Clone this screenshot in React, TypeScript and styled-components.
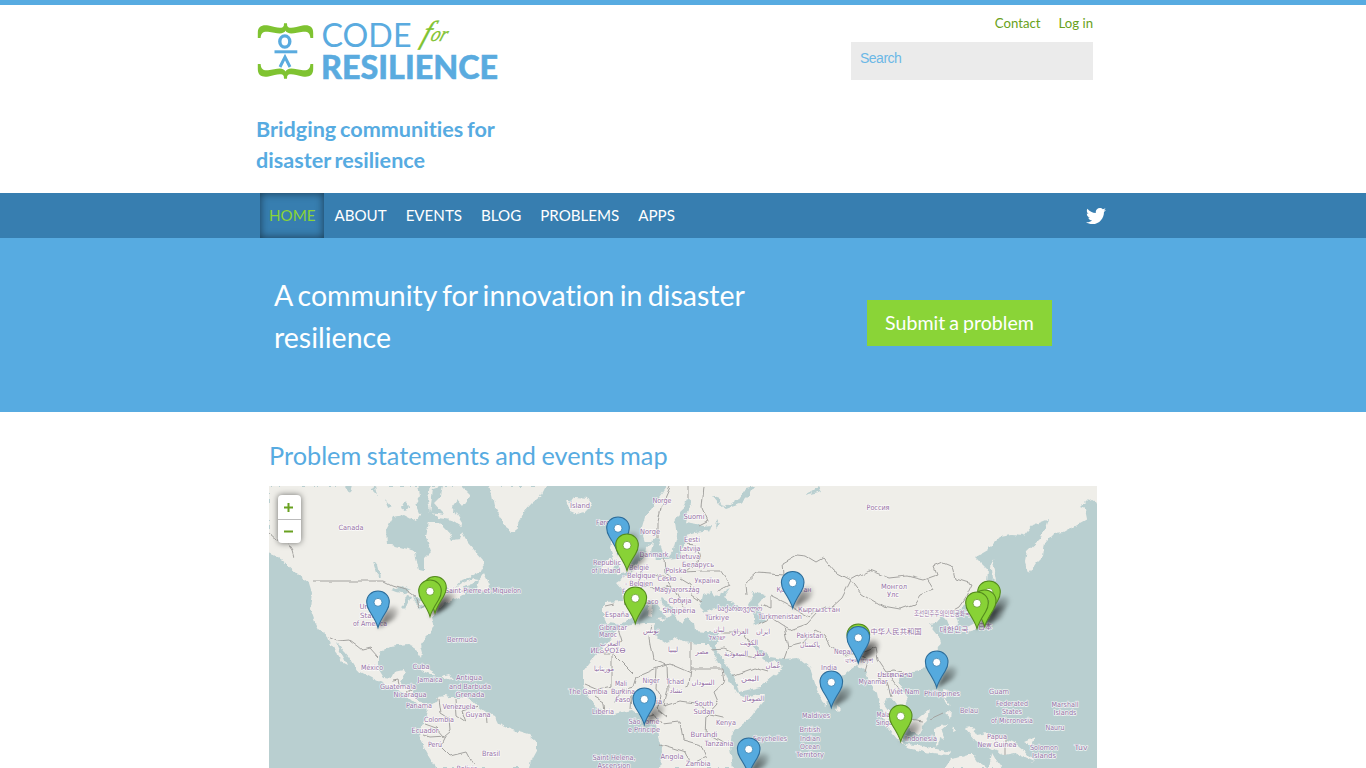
import React from 'react';
import styled, { createGlobalStyle } from 'styled-components';
import { FaTwitter } from 'react-icons/fa';

const BLUE = '#57abe1';
const GREEN = '#8ad437';

const GlobalStyle = createGlobalStyle`
  * { box-sizing: border-box; }
  html, body { margin: 0; height: 768px; overflow: hidden; }
  body { background: #fff; font-family: Lato, sans-serif; font-variant-ligatures: none; }
  a { text-decoration: none; color: inherit; }
`;

const Page = styled.div`
  height: 768px;
  overflow: hidden;
  border-top: 5px solid ${BLUE};
`;

const Container = styled.div`
  width: 854px;
  margin: 0 auto;
`;

const Header = styled(Container)`
  display: flex;
  justify-content: space-between;
  height: 188px;
`;

const Brand = styled.div`
  width: 260px;
`;

const Logo = styled.svg`
  display: block;
  width: 250px;
  height: 76px;
  margin-top: 7px;
  overflow: visible;
`;

const Slogan = styled.h2`
  margin: 26px 0 0;
  font-size: 21.6px;
  line-height: 31px;
  font-weight: 700;
  word-spacing: -1.5px;
  color: ${BLUE};
`;

const Tools = styled.div`
  width: 242px;
  margin-right: 17px;
`;

const UserLinks = styled.div`
  display: flex;
  justify-content: flex-end;
  gap: 18px;
  padding-top: 10px;
  height: 37px;
  font-size: 13.2px;
  line-height: 17px;
  color: #69a120;
`;

const Search = styled.div`
  height: 38px;
  padding: 7px 9px;
  background: #ebebeb;
  color: #6cb8e6;
  font: 14px/18px "Liberation Sans", sans-serif;
  letter-spacing: -0.5px;
`;

const NavBar = styled.nav`
  height: 45px;
  background: #377eb0;
`;

const NavInner = styled(Container)`
  display: flex;
  padding-left: 4px;
  padding-right: 4px;
`;

const NavItem = styled.a<{ $active?: boolean }>`
  height: 45px;
  padding: 0 9px;
  margin-right: 1px;
  font-size: 15.13px;
  line-height: 45px;
  color: ${p => (p.$active ? GREEN : '#fff')};
  box-shadow: ${p => (p.$active ? 'inset 0 0 8px rgba(0,0,0,.55)' : 'none')};
`;

const TwitterLink = styled.a`
  display: flex;
  align-items: center;
  margin-left: auto;
  color: #fff;
`;

const Hero = styled.section`
  height: 174px;
  background: ${BLUE};
`;

const HeroInner = styled(Container)`
  display: flex;
  justify-content: space-between;
  align-items: flex-start;
  padding: 36px 58px 0 18px;
`;

const HeroText = styled.p`
  width: 510px;
  margin: 0;
  color: #fff;
  font-size: 28.5px;
  line-height: 42px;
  word-spacing: -2.1px;
`;

const SubmitButton = styled.a`
  width: 185px;
  height: 46px;
  margin-top: 26px;
  background: ${GREEN};
  color: #fff;
  font-size: 19.6px;
  line-height: 46px;
  text-align: center;
  word-spacing: -1px;
`;

const MapSection = styled.section`
  width: 828px;
  margin: 0 auto;
  padding-top: 25px;
`;

const MapTitle = styled.h2`
  margin: 0;
  height: 49px;
  font-size: 25.3px;
  line-height: 36px;
  font-weight: 400;
  word-spacing: -1px;
  color: ${BLUE};
`;

const MapFrame = styled.div`
  position: relative;
  height: 282px;
  overflow: hidden;
  background: #b9cfd0;
`;

const MapDrawing = styled.svg`
  display: block;
  width: 828px;
  height: 282px;
`;

const ZoomControl = styled.div`
  position: absolute;
  top: 9px;
  left: 9px;
  width: 23px;
  border-radius: 4px;
  background: #fff;
  box-shadow: 0 0 6px rgba(0, 0, 0, 0.55);
`;

const ZoomButton = styled.div`
  display: flex;
  align-items: center;
  justify-content: center;
  height: 24px;
  padding-right: 2px;
  & + & { border-top: 1px solid #bbb; }
`;

const land = [
  // North, Central and western South America
  'M269,486 L461,486 470,495 462,506 457,500 452,507 462,523 461,530 468,543 483,560 484,569 470,577 462,580 455,588 464,582 473,578 479,579 471,584 463,586 466,592 459,597 451,601 446,603 440,607 436,613 432,617 434,625 431,632 425,638 420,645 422,653 421,659 417,653 414,646 408,644 399,645 390,646 382,651 378,658 378,667 384,677 391,678 394,672 403,670 405,673 400,681 402,685 413,687 414,696 418,701 424,703 429,706 435,703 440,696 445,695 450,698 469,698 478,706 486,712 495,716 499,724 508,728 519,732 529,735 537,742 537,749 531,760 529,768 436,768 429,757 421,742 420,731 425,719 428,709 419,707 411,700 402,692 386,685 372,678 357,670 349,657 340,646 336,642 339,649 344,658 347,665 343,663 337,653 331,645 328,637 319,630 315,622 310,608 312,593 309,583 299,575 287,564 278,557 269,553Z',
  'M489,486 L492,495 494,505 500,516 505,527 512,532 516,532 518,523 523,513 532,503 541,496 546,486Z',
  'M484,573 L487,579 490,586 487,591 477,590 479,580Z',
  'M566,500 L571,502 575,497 588,498 592,505 585,512 577,514 570,511Z',
  'M612,540 L618,543 622,555 632,565 630,572 617,575 620,566 614,560 610,548Z',
  'M603,562 L612,558 615,565 611,572 600,574Z',
  // Eurasia
  'M667,486 L657,500 645,517 641,530 645,542 652,542 658,537 662,550 667,558 673,550 677,536 675,522 682,509 687,499 692,503 687,513 685,522 697,524 708,526 703,531 695,532 685,535 684,543 681,551 682,558 668,560 655,560 651,553 653,543 646,547 644,558 637,563 631,572 625,577 616,583 622,590 623,601 604,602 604,617 607,623 618,624 626,622 633,617 640,608 652,601 657,605 667,618 671,615 662,604 661,596 671,606 678,620 682,625 687,617 694,623 695,631 707,632 718,632 718,640 715,648 723,660 735,680 739,692 760,687 777,673 783,666 775,660 768,663 760,655 752,645 757,647 770,657 783,659 798,658 810,668 813,677 817,690 825,706 831,700 834,684 847,672 857,665 865,670 870,683 877,693 880,708 887,716 893,722 892,715 884,704 887,698 893,700 898,707 904,705 908,698 902,688 898,679 904,674 920,671 934,657 941,643 938,634 930,624 938,622 943,616 947,620 950,628 955,629 958,621 954,614 965,605 977,594 987,582 988,570 980,562 975,557 987,550 1000,537 1012,535 1024,536 1033,525 1048,519 1044,531 1039,540 1027,551 1025,562 1029,574 1036,563 1043,556 1045,542 1054,533 1064,532 1087,519 1085,509 1080,507 1089,498 1097,503 1110,510 1110,470 667,470Z',
  // Africa
  'M618,628 L626,626 642,623 655,623 653,632 659,638 667,643 675,637 684,642 698,644 710,644 718,663 727,677 737,692 743,698 765,694 763,701 750,718 732,733 730,747 733,768 660,768 662,750 658,737 656,724 642,717 632,710 618,713 607,716 597,708 587,696 584,684 584,670 590,662 599,652 610,640Z',
  // Islands
  'M418,669 L427,668 437,674 430,674Z M442,676 L449,674 453,678 444,679Z',
  'M837,705 L841,709 838,712 835,709Z',
  'M992,558 L995,570 997,581 992,579 991,568Z M985,593 L994,590 994,600 987,601Z M985,604 L990,612 984,624 974,630 963,633 962,630 973,624 981,618Z',
  'M879,712 L887,717 898,731 904,744 898,740 888,728Z M904,744 L917,745 932,748 950,752 948,755 925,752 907,748Z',
  'M909,718 L916,720 922,715 930,708 929,716 925,722 918,735 910,732Z',
  'M935,728 L948,724 941,730 945,740 939,737 938,747 935,740Z M943,689 L948,690 946,699 951,706 945,702Z M945,715 L951,710 950,719Z M953,726 L956,731 952,732Z M940,676 L943,671 942,680Z',
  'M965,728 L972,727 977,735 987,733 1000,737 1014,742 1024,750 1034,762 1014,753 1004,755 990,748 976,741Z M1024,742 L1036,737 1031,746Z',
  'M945,768 L951,759 957,758 967,755 974,755 979,763 987,768Z M989,768 L992,753 996,760 1002,768Z',
  'M649,605 L652,605 651,617 648,616Z M667,618 L663,622 656,619Z',
];

const water = [
  // Hudson Bay, Hudson Strait and the Arctic channels
  'M386,530 L393,517 405,515 416,521 421,513 428,510 438,518 452,520 463,527 460,539 452,540 448,532 438,522 429,522 426,537 431,551 424,558 424,571 419,570 416,558 415,551 400,547 387,544Z',
  'M418,484 L430,484 428,500 430,511 419,514 415,504 420,496Z M433,489 L443,486 441,496 434,503 440,510 445,515 430,513Z',
  'M405,500 L409,505 405,511 401,508Z M345,486 L352,486 350,493Z M371,488 L376,486 378,495Z M385,499 L392,507 388,509Z',
  'M373,562 L378,565 381,577 377,575Z',
  'M392,590 L402,586 411,590 406,594 397,592Z M407,595 L411,596 405,609 402,606Z M413,595 L422,598 419,607 415,603Z M417,608 L427,604 425,609Z',
  'M700,607 L703,595 712,592 717,597 730,588 723,597 737,605 740,611 720,608 705,612Z',
  'M752,597 L753,592 765,595 759,603 761,613 765,621 755,625 753,613 748,605Z',
  'M711,495 L720,498 723,507 738,500 746,488 754,486 750,494 740,504 726,509 719,504Z M805,495 L814,490 819,486 822,491Z M703,526 L712,525 709,533Z M717,519 L720,524 716,528Z',
];

const borders = [
  'M269,533 L277,540 286,541 292,550 294,557',
  'M313,581 L384,581 392,585 405,589 415,596 419,608 428,601 438,600',
  'M329,637 L338,641 349,640 357,646 362,650 370,648 378,657',
  'M393,680 L398,679 400,688 M411,689 L405,694',
  'M439,699 L441,713 449,718 450,730 443,736 436,728 425,724 M455,700 L456,715 466,722 462,711 478,706 M486,712 L487,722 M423,735 L430,737 446,736 441,746 450,755 466,751 473,764',
  'M670,487 L661,507 658,522 658,538 M688,486 L688,499 M704,486 L702,507 708,521 700,525',
  'M685,543 L696,544 700,559 685,572 M664,558 L665,573 675,579 M685,572 L703,571 720,571 730,585 716,592 M680,579 L690,585 692,595 702,602',
  'M640,571 L639,584 649,585 655,590 670,586 677,592 684,607 M604,606 L613,604 M623,603 L641,607 M655,574 L665,578 672,587',
  'M747,595 L746,583 757,573 784,575 783,563 797,555 806,556 816,562 823,558 834,571 851,580 842,598 832,607 817,610 809,617 798,611 785,603 771,596 771,608 761,604',
  'M851,580 L869,570 889,578 907,576 923,580 937,575 934,567 943,563 953,567 956,579 972,584 966,597 959,607 950,612',
  'M851,580 L861,593 883,606 900,609 914,604 920,595 934,589 927,578',
  'M757,624 L770,618 782,626 790,630 807,624 817,613 M784,627 L788,647 784,658 M788,647 L804,643 815,630 825,635 832,648 847,656 858,654 867,651 876,647',
  'M691,643 L691,669 722,669 M691,669 L689,684 684,687 M598,653 L612,653 636,677 657,668 670,664 691,673 M652,624 L649,638 653,660 667,665 M612,653 L612,686 598,689 584,683',
  'M618,628 L622,641 611,646 M636,677 L633,687 619,691 615,703 M657,668 L656,689 661,697 657,709 667,717 M667,665 L668,690 664,706 680,701 696,703 710,714 723,717 M642,717 L654,714 661,724 M630,709 L631,696 M604,713 L603,702 595,697',
  'M722,669 L724,682 713,692 718,704 707,716 706,734 715,737 729,745 M732,676 L754,668 768,672 M712,650 L724,649 738,655 757,658 M722,632 L743,632 752,645 M662,724 L680,722 683,740 701,745 706,757 691,764 686,752 660,744',
  'M858,654 L868,660 865,671 M876,647 L878,660 886,672 894,671 902,673 M878,678 L887,682 891,696 M887,672 L900,690 M943,714 L930,720 M909,719 L923,721 M1005,738 L1005,755',
];

// text, centre x, baseline y, drawn width
const labels: [string, number, number, number][] = [
  ['Canada', 351, 530, 25], ['United', 371, 609, 23], ['States', 371, 618, 22], ['of America', 370, 626, 34],
  ['Saint-Pierre-et-Miquelon', 483, 593, 76], ['Bermuda', 462, 642, 30], ['México', 372, 670, 22],
  ['Cuba', 421, 669, 17], ['Jamaica', 430, 682, 25], ['Guatemala', 398, 689, 36], ['Nicaragua', 410, 697, 33],
  ['Antigua', 469, 680, 26], ['and Barbuda', 470, 689, 42], ['Grenada', 470, 697, 29], ['Panama', 419, 708, 26],
  ['Venezuela', 459, 709, 33], ['Guyana', 478, 717, 25], ['Colombia', 439, 722, 30], ['Ecuador', 425, 733, 27],
  ['Perú', 435, 747, 14], ['Brasil', 491, 756, 18], ['Bolivia', 467, 771, 21],
  ['Ísland', 580, 508, 20], ['Norge', 662, 503, 19], ['Norge', 650, 534, 20], ['Føroyar', 608, 525, 24],
  ['Suomi', 694, 519, 21], ['Danmark', 654, 557, 29], ['Eesti', 692, 542, 16], ['Latvija', 690, 551, 21],
  ['Lietuva', 688, 558.5, 24], ['Беларусь', 698, 567, 32], ['Republic', 607, 565, 28], ['of Ireland', 606, 573, 29],
  ['België', 639, 570, 20], ['- Belgique', 639, 578, 33], ['- Belgien', 639, 586, 28], ['Polska', 676, 573, 21],
  ['Česko', 667, 581, 19], ['Україна', 707, 583, 25], ['Magyarország', 677, 592, 45], ['France', 633, 594, 22],
  ['Monaco', 646, 604, 25], ['Србија', 680, 603, 23], ['Shqipëria', 679, 613, 33], ['España', 617, 617, 24],
  ['Gibraltar', 613, 630, 28], ['Maroc', 608, 637, 18], ['المغرب', 610, 646, 20], ['ⵍⵎⴰⵖⵔⵉⴱ', 608, 653, 35],
  ['تونس', 651, 633, 16], ['ليبيا', 673, 652, 10], ['موريتانيا', 604, 671, 20], ['مصر', 702, 654, 13],
  ['Mali', 621, 686, 12], ['Niger', 651, 683, 17], ['Tchad', 675, 684, 18], ['تشاد', 676, 693, 13],
  ['The Gambia', 588, 694, 39], ['Burkina', 623, 694, 24], ['Faso', 623, 702, 15], ['Nigeria', 650, 704, 24],
  ['Liberia', 603, 714, 22], ['São Tomé', 644, 724, 31], ['e Príncipe', 644, 732, 32],
  ['Saint Helena,', 614, 760, 43], ['Ascension', 614, 768, 33], ['Angola', 672, 759, 23],
  ['Burundi', 704, 737, 27], ['Tanzania', 719, 746, 29], ['Zambia', 698, 766, 25], ['Kenya', 726, 725, 20],
  ['South', 704, 706, 19], ['Sudan', 704, 714, 21], ['السودان', 703, 685, 23], ['الصومال', 753, 701, 22],
  ['السعودية', 736, 656, 24], ['قطر', 759, 656, 12], ['عُمان', 773, 668, 15], ['اليمن', 750, 681, 18],
  ['الكويت', 749, 645, 18], ['العراق', 740, 634, 17], ['ایران', 763, 634, 14], ['لبنان', 719, 632, 11], ['ישראל', 717, 640, 17],
  ['Türkiye', 717, 620, 24], ['საქართველო', 740, 611, 45], ['Türkmenistan', 780, 619, 44],
  ['Қазақстан', 794, 592, 35], ['Кыргызстан', 819, 612, 42], ['Россия', 878, 510, 23],
  ['Монгол', 894, 589, 26], ['Улс', 893, 597, 12], ['조선민주주의인민공화국', 942, 616, 56],
  ['中华人民共和国', 896, 634, 51], ['대한민국', 954, 632, 29], ['日本', 985, 629, 14],
  ['Pakistan', 810, 638, 27], ['پاکستان', 810, 647, 20], ['Nepal', 843, 654, 18], ['বাংলাদেশ', 859, 663, 28],
  ['India', 829, 670, 16], ['Myanmar', 873, 684, 29], ['ປະເທດລາວ', 895, 677, 35], ['Việt Nam', 905, 694, 29],
  ['Philippines', 942, 696, 36], ['Malaysia', 889, 717, 25], ['Singapore', 891, 725, 30], ['Indonesia', 921, 741, 32],
  ['Maldives', 816, 718, 28], ['British', 810, 732, 21], ['Indian', 810, 741, 20], ['Ocean', 810, 749, 20],
  ['Territory', 810, 757, 28], ['Seychelles', 770, 741, 34], ['Guam', 999, 694, 20], ['Belau', 969, 713, 18],
  ['Federated', 1012, 706, 32], ['States', 1012, 714, 20], ['of Micronesia', 1012, 723, 42],
  ['Marshall', 1065, 707, 27], ['Islands', 1065, 715, 23], ['Nauru', 1055, 730, 19], ['Papua', 997, 739, 20],
  ['New Guinea', 997, 747, 39], ['Solomon', 1044, 750, 28], ['Islands', 1044, 758, 24], ['Tuv', 1081, 750, 13],
];

// tip x, tip y, colour
const markers: [number, number, 'blue' | 'green'][] = [
  [618, 554, 'blue'], [627, 571, 'green'], [792.7, 608.5, 'blue'], [435, 613.5, 'green'], [430, 617, 'green'],
  [989, 618, 'green'], [635.3, 624, 'green'], [984.7, 627, 'green'], [378, 628, 'blue'], [977, 629, 'green'],
  [858.3, 661, 'green'], [858.3, 663.5, 'blue'], [936.7, 688, 'blue'], [831.3, 708, 'blue'], [644.3, 725, 'blue'],
  [900.7, 742, 'green'], [748.7, 775, 'blue'],
];

const PIN = 'M0,-0.5 C-1.5,-6 -5,-11.5 -8.5,-17 C-10.5,-20.3 -11.3,-22.8 -11.3,-26 C-11.3,-32.3 -6.3,-37 0,-37 C6.3,-37 11.3,-32.3 11.3,-26 C11.3,-22.8 10.5,-20.3 8.5,-17 C5,-11.5 1.5,-6 0,-0.5Z';

const BRACE = 'M257.8,38 V33 C257.8,26 262.5,24.6 268.5,25.6 C274,26.6 279,28.6 282.3,27.4 Q284.4,26.4 284,23.2 L287,23.2 Q286.6,26.4 288.7,27.4 C292,28.6 297,26.6 302.5,25.6 C308.5,24.6 313.2,26 313.2,33 V38 L310.4,38 C310,33 308,31.4 303,31.8 C297,32.4 291,34.6 287.5,32.6 Q285.8,31.6 285.5,30.4 Q285.2,31.6 283.5,32.6 C280,34.6 274,32.4 268,31.8 C263,31.4 261,33 260.6,38Z';

const BrandLogo = () => (
  <Logo viewBox="256 12 250 76">
    <g fill="#7fc331">
      <path d={BRACE} />
      <path d={BRACE} transform="translate(0 102) scale(1 -1)" />
    </g>
    <g fill="none" stroke="#5aabdf" strokeWidth="3">
      <ellipse cx="284.8" cy="41.5" rx="5" ry="5.6" strokeWidth="3.4" />
      <path d="M274.5,51.8 H297.3" />
      <path d="M280,67 L285,57 L290,67" />
    </g>
    <g fontFamily="Lato, sans-serif" fill="#5aabdf">
      <text x="321.5" y="47.3" fontSize="32.5" textLength="90" lengthAdjust="spacingAndGlyphs">CODE</text>
      <text x="321" y="79.2" fontSize="32.5" fontWeight="900" stroke="#5aabdf" strokeWidth=".5" textLength="177" lengthAdjust="spacingAndGlyphs">RESILIENCE</text>
    </g>
    <g transform="translate(422 42) skewX(-20)" fill="#7fc331" stroke="#7fc331" strokeWidth=".3" fontFamily="'Liberation Serif', serif" fontStyle="italic">
      <text x="-2" y="1" fontSize="32" textLength="8" lengthAdjust="spacingAndGlyphs">f</text>
      <text x="7" y="-1.5" fontSize="21" textLength="16" lengthAdjust="spacingAndGlyphs">or</text>
    </g>
  </Logo>
);

const Pin = ({ x, y, kind }: { x: number; y: number; kind: 'blue' | 'green' }) => (
  <g transform={`translate(${x} ${y})`}>
    <path d={PIN} fill={kind === 'blue' ? '#55aade' : '#88d236'} stroke={kind === 'blue' ? '#2d6d9a' : '#548a1e'} strokeWidth="1.1" />
    <circle cy="-25.7" r="4" fill="#fff" stroke={kind === 'blue' ? '#357fae' : '#659b2b'} strokeWidth=".8" />
  </g>
);

const WorldMap = () => (
  <MapDrawing viewBox="269 486 828 282">
    <defs>
      <filter id="coast" x="-5%" y="-5%" width="110%" height="110%" colorInterpolationFilters="sRGB">
        <feTurbulence type="fractalNoise" baseFrequency="0.16" numOctaves="3" seed="4" />
        <feDisplacementMap in="SourceGraphic" scale="5" xChannelSelector="R" yChannelSelector="G" />
      </filter>
      <filter id="frontier" x="-5%" y="-5%" width="110%" height="110%" colorInterpolationFilters="sRGB">
        <feTurbulence type="fractalNoise" baseFrequency="0.1" numOctaves="1" seed="4" />
        <feDisplacementMap in="SourceGraphic" scale="6" xChannelSelector="R" yChannelSelector="G" />
      </filter>
      <filter id="soft" x="-50%" y="-50%" width="200%" height="200%"><feGaussianBlur stdDeviation="2.2" /></filter>
      <linearGradient id="shade" x1="0" y1="1" x2="1" y2="0">
        <stop offset="0" stopOpacity=".65" />
        <stop offset=".5" stopOpacity=".42" />
        <stop offset="1" stopOpacity=".05" />
      </linearGradient>
    </defs>
    <g filter="url(#coast)">
      <rect x="260" y="476" width="846" height="302" fill="#b9cfd0" />
      <path d={land.join(' ')} fill="#efeee9" />
      <path d={water.join(' ')} fill="#b9cfd0" />
    </g>
    <path d={borders.join(' ')} fill="none" stroke="#a3a29f" strokeWidth="1" filter="url(#frontier)" />
    <g fontFamily="'DejaVu Sans', 'Noto Sans CJK SC', 'Noto Sans CJK KR', sans-serif" fontSize="7.2" fill="#9672a6" stroke="#fff" strokeOpacity=".75" strokeWidth="1.6" strokeLinejoin="round" paintOrder="stroke">
      {labels.map(([text, x, y, w], i) => (
        <text key={i} x={x - w / 2} y={y} textLength={w} lengthAdjust="spacingAndGlyphs">{text}</text>
      ))}
    </g>
    {markers.map(([x, y], i) => (
      <path key={i} d="M0,0 L7,-16 Q13,-24 19,-21 Q23,-17 16,-9 Z" transform={`translate(${x} ${y})`} fill="url(#shade)" filter="url(#soft)" />
    ))}
    {markers.map(([x, y, kind], i) => <Pin key={i} x={x} y={y} kind={kind} />)}
  </MapDrawing>
);

const navItems = ['HOME', 'ABOUT', 'EVENTS', 'BLOG', 'PROBLEMS', 'APPS'];

export default function App() {
  return (
    <Page>
      <GlobalStyle />
      <Header as="header">
        <Brand>
          <BrandLogo />
          <Slogan>Bridging communities for disaster resilience</Slogan>
        </Brand>
        <Tools>
          <UserLinks><a>Contact</a><a>Log in</a></UserLinks>
          <Search>Search</Search>
        </Tools>
      </Header>
      <NavBar>
        <NavInner>
          {navItems.map((item, i) => <NavItem key={item} $active={i === 0}>{item}</NavItem>)}
          <TwitterLink><FaTwitter size={20} /></TwitterLink>
        </NavInner>
      </NavBar>
      <Hero>
        <HeroInner>
          <HeroText>A community for innovation in disaster resilience</HeroText>
          <SubmitButton>Submit a problem</SubmitButton>
        </HeroInner>
      </Hero>
      <MapSection>
        <MapTitle>Problem statements and events map</MapTitle>
        <MapFrame>
          <WorldMap />
          <ZoomControl>
            <ZoomButton>
              <svg width="11" height="11"><path d="M1,5.5H10M5.5,1V10" stroke="#69a120" strokeWidth="2" /></svg>
            </ZoomButton>
            <ZoomButton>
              <svg width="11" height="11"><path d="M1,5.5H10" stroke="#69a120" strokeWidth="2" /></svg>
            </ZoomButton>
          </ZoomControl>
        </MapFrame>
      </MapSection>
    </Page>
  );
}
